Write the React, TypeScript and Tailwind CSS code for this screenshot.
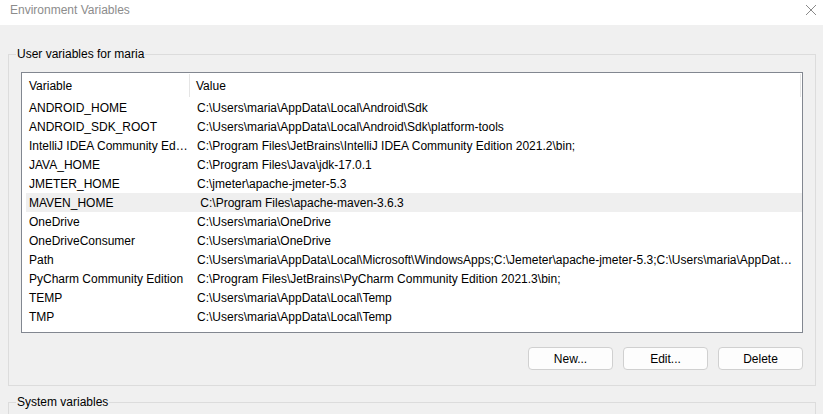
const userVars: [string, string][] = [
  ["ANDROID_HOME", "C:\\Users\\maria\\AppData\\Local\\Android\\Sdk"],
  ["ANDROID_SDK_ROOT", "C:\\Users\\maria\\AppData\\Local\\Android\\Sdk\\platform-tools"],
  ["IntelliJ IDEA Community Edition", "C:\\Program Files\\JetBrains\\IntelliJ IDEA Community Edition 2021.2\\bin;"],
  ["JAVA_HOME", "C:\\Program Files\\Java\\jdk-17.0.1"],
  ["JMETER_HOME", "C:\\jmeter\\apache-jmeter-5.3"],
  ["MAVEN_HOME", " C:\\Program Files\\apache-maven-3.6.3"],
  ["OneDrive", "C:\\Users\\maria\\OneDrive"],
  ["OneDriveConsumer", "C:\\Users\\maria\\OneDrive"],
  [
    "Path",
    "C:\\Users\\maria\\AppData\\Local\\Microsoft\\WindowsApps;C:\\Jemeter\\apache-jmeter-5.3;C:\\Users\\maria\\AppData\\Local\\Programs",
  ],
  ["PyCharm Community Edition", "C:\\Program Files\\JetBrains\\PyCharm Community Edition 2021.3\\bin;"],
  ["TEMP", "C:\\Users\\maria\\AppData\\Local\\Temp"],
  ["TMP", "C:\\Users\\maria\\AppData\\Local\\Temp"],
];

// selected-but-unfocused row
const hovered = "MAVEN_HOME";

export default function App() {
  return (
    <div className="h-[414px] w-[823px] overflow-hidden bg-[#f0f0f0] font-['Liberation_Sans',Arial,sans-serif] text-[12px] text-black">
      {/* title bar */}
      <div className="flex h-[25px] items-center justify-between bg-white pb-[5px] pl-[10px] pr-[6px]">
        <span className="text-[#8c8c8c]">Environment Variables</span>
        <svg width="12" height="12" viewBox="0 0 12 12">
          <path d="M1 1L11 11M11 1L1 11" stroke="#8a8a8a" strokeWidth="1" />
        </svg>
      </div>

      <fieldset className="ml-[8px] mr-[7px] mt-[21px] min-w-0 border border-[#dcdcdc] px-[12px] pb-[15px] pt-[10px]">
        <legend className="-ml-[5px] px-[1px] leading-[16px]">User variables for maria</legend>

        <div className="h-[261px] border border-[#828790] bg-white">
          {/* header */}
          <div className="flex h-[25px] items-stretch">
            <div className="my-[1px] flex w-[168px] items-center border-r border-[#e5e5e5] pl-[7px]">Variable</div>
            <div className="my-[1px] mr-[1px] flex flex-1 items-center border-r border-[#e5e5e5] pl-[6px]">Value</div>
          </div>
          {userVars.map(([name, value]) => (
            <div
              key={name}
              className={`ml-[4px] flex h-[19px] min-w-0 items-center ${name === hovered ? "bg-[#efefef]" : ""}`}
            >
              <div className="w-[164px] shrink-0 overflow-hidden text-ellipsis whitespace-nowrap pl-[3px] pr-[2px]">{name}</div>
              <div className="min-w-0 flex-1 overflow-hidden text-ellipsis whitespace-pre pl-[7px] pr-[4px]">{value}</div>
            </div>
          ))}
        </div>

        <div className="mt-[14px] flex justify-end gap-[10px]">
          <WinButton label="New..." />
          <WinButton label="Edit..." />
          <WinButton label="Delete" />
        </div>
      </fieldset>

      <fieldset className="ml-[8px] mr-[7px] mt-[8px] h-[40px] min-w-0 border border-[#dcdcdc] px-[12px]">
        <legend className="-ml-[5px] px-[1px] leading-[16px]">System variables</legend>
      </fieldset>
    </div>
  );
}

function WinButton({ label }: { label: string }) {
  return (
    <button className="h-[23px] w-[85px] rounded-[4px] border border-[#d0d0d0] bg-[#fdfdfd] text-[12px] text-black">
      {label}
    </button>
  );
}
